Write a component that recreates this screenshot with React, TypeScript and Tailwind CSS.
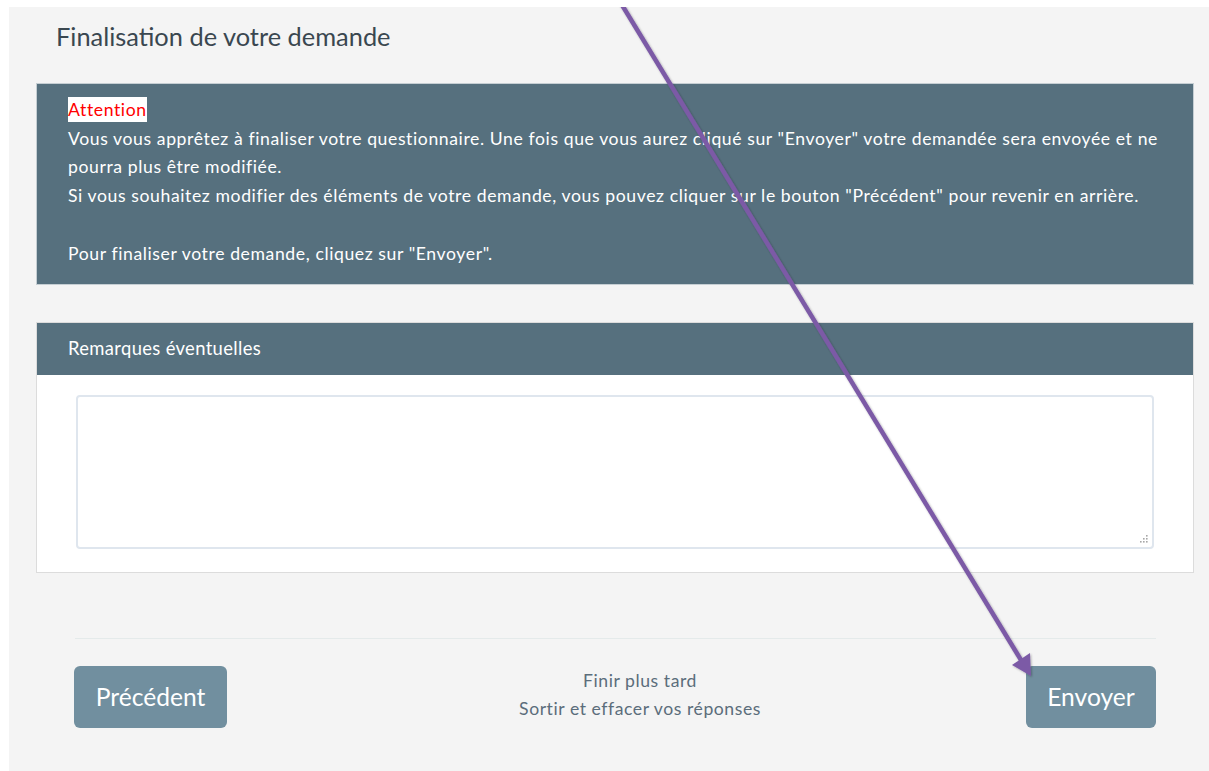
import React from "react";

const font = { fontFamily: "Lato, 'Open Sans', sans-serif" };

function Arrow() {
  return (
    <svg
      className="pointer-events-none absolute left-0 top-0"
      width={1209}
      height={771}
      viewBox="0 0 1209 771"
    >
      <defs>
        <filter id="arrowShadow" x="-10%" y="-10%" width="120%" height="120%">
          <feDropShadow dx="1" dy="1" stdDeviation="1.2" floodColor="#000" floodOpacity="0.3" />
        </filter>
      </defs>
      <g filter="url(#arrowShadow)">
        <line x1={619} y1={-7} x2={1021} y2={653} stroke="#7b5aa6" strokeWidth={4.5} />
        <polygon points="1031,669 1012,658 1030,646" fill="#7b5aa6" />
      </g>
    </svg>
  );
}

// dotted resize grip in the corner of the remarks field
function Grip() {
  const dots = [
    [6, 0],
    [3, 3],
    [6, 3],
    [0, 6],
    [3, 6],
    [6, 6],
  ];
  return (
    <svg className="pointer-events-none absolute bottom-[6px] right-[6px]" width={8} height={8} viewBox="0 0 8 8">
      {dots.map(([x, y], i) => (
        <rect key={i} x={x} y={y} width={1.6} height={1.6} fill="#a8a8a8" />
      ))}
    </svg>
  );
}

export default function App() {
  return (
    <div className="relative min-h-screen bg-white" style={font}>
      <div className="ml-[9px] mt-[7px] h-[764px] bg-[#f4f4f4] pt-[13px]">
        <h1 className="pl-[47px] text-[25.4px] leading-[32px] text-[#3a4750]">
          Finalisation de votre demande
        </h1>

        <div className="ml-[27px] mr-[15px] mt-[31px] border border-[#c5ced3] bg-[#56707e] pl-[31px] pr-[22px] pb-[16px] pt-[12px] text-[17.6px] leading-[28.7px] tracking-[0.6px] text-white">
          <span className="bg-white py-[2px] text-[#ff0000]">Attention</span>
          <br />
          Vous vous apprêtez à finaliser votre questionnaire. Une fois que vous aurez cliqué sur "Envoyer" votre demandée sera envoyée et ne pourra plus être modifiée.
          <br />
          Si vous souhaitez modifier des éléments de votre demande, vous pouvez cliquer sur le bouton "Précédent" pour revenir en arrière.
          <br />
          <br />
          Pour finaliser votre demande, cliquez sur "Envoyer".
        </div>

        <div className="ml-[27px] mr-[15px] mt-[37px] border border-[#dcdcdc] bg-white">
          <div className="flex h-[52px] items-center bg-[#56707e] pl-[31px] text-[18.4px] tracking-[0.35px] text-white">
            Remarques éventuelles
          </div>
          <div className="px-[39px] pb-[23px] pt-[20px]">
            <div className="relative">
              <textarea className="block h-[154px] w-full resize-none rounded-[4px] border-2 border-[#dfe6ee] bg-white outline-none" />
              <Grip />
            </div>
          </div>
        </div>

        <div className="ml-[66px] mr-[53px] mt-[65px] border-t border-[#e4eaea]" />

        <div className="ml-[65px] mr-[53px] mt-[27px] flex items-center">
          <button className="h-[62px] w-[153px] rounded-[6px] bg-[#718f9f] text-[24.6px] text-white">
            Précédent
          </button>
          <div className="flex-1 pb-[4px] pl-[27px] text-center text-[17.6px] leading-[28px] tracking-[0.55px] text-[#5b6d7b]">
            <div>Finir plus tard</div>
            <div>Sortir et effacer vos réponses</div>
          </div>
          <button className="h-[62px] w-[130px] rounded-[6px] bg-[#718f9f] text-[24.6px] text-white">
            Envoyer
          </button>
        </div>
      </div>
      <Arrow />
    </div>
  );
}
